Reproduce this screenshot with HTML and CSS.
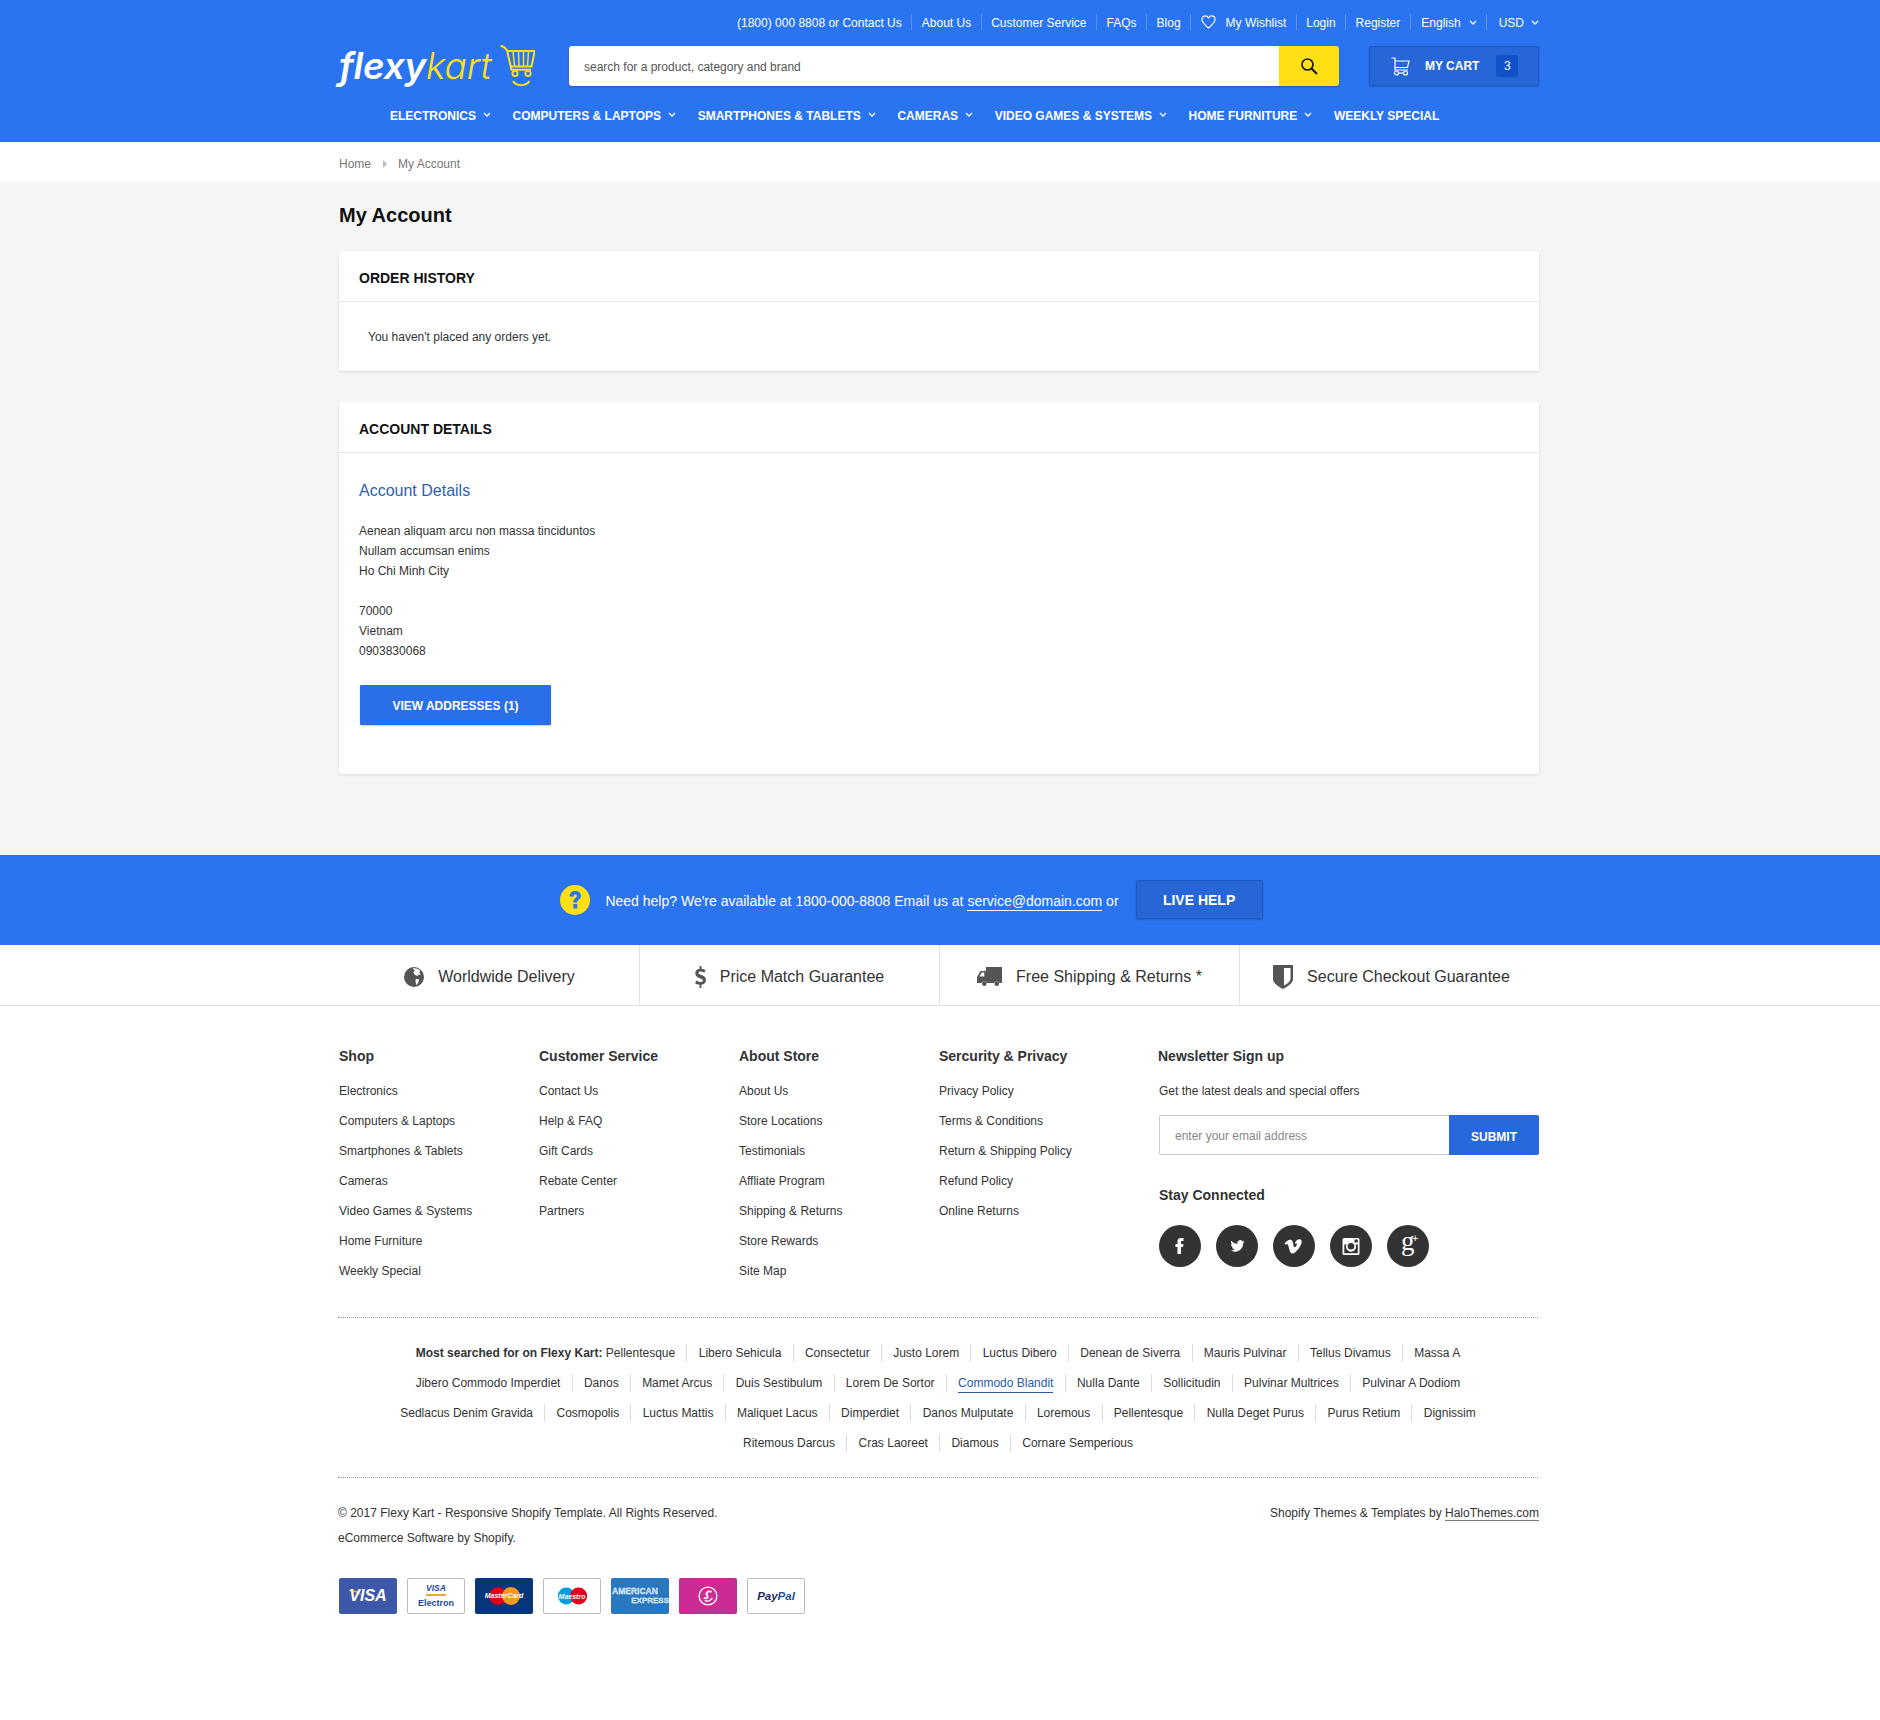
FILE: index.html
```html
<!DOCTYPE html>
<html lang="en">
<head>
<meta charset="utf-8">
<title>My Account - Flexy Kart</title>
<link rel="stylesheet" href="styles.css">
</head>
<body>
<header class="site-header">
  <div class="wrap">
    <ul class="topbar">
      <li>(1800) 000 8808 or Contact Us</li>
      <li>About Us</li>
      <li>Customer Service</li>
      <li>FAQs</li>
      <li>Blog</li>
      <li class="has-icon"><svg class="heart" viewBox="0 0 16 15" width="15" height="14"><path d="M8 14C3 9.800 1 7.600 1 4.900 1 2.700 2.600 1 4.600 1 6 1 7.200 1.800 8 3.200 8.800 1.800 10 1 11.400 1 13.400 1 15 2.700 15 4.900 15 7.600 13 9.800 8 14Z" fill="none" stroke="#fff" stroke-width="1.200"/></svg>My Wishlist</li>
      <li>Login</li>
      <li>Register</li>
      <li class="has-chev lang">English<svg class="chev" viewBox="0 0 8 5" width="8" height="5"><path d="M1 1l3 3 3-3" fill="none" stroke="#fff" stroke-width="1.300"/></svg></li>
      <li class="has-chev last">USD<svg class="chev" viewBox="0 0 8 5" width="8" height="5"><path d="M1 1l3 3 3-3" fill="none" stroke="#fff" stroke-width="1.300"/></svg></li>
    </ul>
    <div class="mainbar">
      <div class="logo">
        <span class="logo-a">flexy</span><span class="logo-b">kart</span>
        <svg class="logo-cart" viewBox="0 0 35 42" width="35" height="42" fill="none" stroke="#ffe015" stroke-width="1.800">
          <path d="M0.500 0.900C4 1.200 6 3 7.300 6.500L11.500 24.800H31" stroke-width="2"/>
          <path d="M7 6H34.800L31.500 21.500H10.800" stroke-width="2"/>
          <path d="M13 6.500L14.500 21M18.500 6.500L19 21M23.500 6.500L23.500 21M28.500 6.500L27.500 21" stroke-width="1.500"/>
          <circle cx="15" cy="28.500" r="2.600"/><circle cx="28" cy="28.500" r="2.600"/>
          <path d="M13 36C16 41.500 26 41.500 29.500 36" stroke-width="2"/>
        </svg>
      </div>
      <form class="search">
        <div class="search-field">search for a product, category and brand</div>
        <div class="search-btn"><svg viewBox="0 0 18 18" width="18" height="18"><circle cx="7.500" cy="7.500" r="5.500" fill="none" stroke="#1a1a1a" stroke-width="1.700"/><path d="M11.500 11.500L17 17" stroke="#1a1a1a" stroke-width="2.200"/></svg></div>
      </form>
      <div class="cart">
        <svg viewBox="0 0 19 19" width="19" height="19" fill="none" stroke="#fff" stroke-width="1.200"><path d="M0.500 1H4V13H17M4 4H18L16.500 10.500H4"/><circle cx="5.500" cy="16" r="2"/><circle cx="14.500" cy="16" r="2"/><path d="M7.500 16H12.500"/></svg>
        <span class="cart-label">MY CART</span>
        <span class="cart-count">3</span>
      </div>
    </div>
    <nav class="mainnav">
      <a class="nav-item">ELECTRONICS<svg class="chev" viewBox="0 0 8 5" width="8" height="5"><path d="M1 1l3 3 3-3" fill="none" stroke="#fff" stroke-width="1.300"/></svg></a>
      <a class="nav-item">COMPUTERS &amp; LAPTOPS<svg class="chev" viewBox="0 0 8 5" width="8" height="5"><path d="M1 1l3 3 3-3" fill="none" stroke="#fff" stroke-width="1.300"/></svg></a>
      <a class="nav-item">SMARTPHONES &amp; TABLETS<svg class="chev" viewBox="0 0 8 5" width="8" height="5"><path d="M1 1l3 3 3-3" fill="none" stroke="#fff" stroke-width="1.300"/></svg></a>
      <a class="nav-item">CAMERAS<svg class="chev" viewBox="0 0 8 5" width="8" height="5"><path d="M1 1l3 3 3-3" fill="none" stroke="#fff" stroke-width="1.300"/></svg></a>
      <a class="nav-item">VIDEO GAMES &amp; SYSTEMS<svg class="chev" viewBox="0 0 8 5" width="8" height="5"><path d="M1 1l3 3 3-3" fill="none" stroke="#fff" stroke-width="1.300"/></svg></a>
      <a class="nav-item">HOME FURNITURE<svg class="chev" viewBox="0 0 8 5" width="8" height="5"><path d="M1 1l3 3 3-3" fill="none" stroke="#fff" stroke-width="1.300"/></svg></a>
      <a class="nav-item">WEEKLY SPECIAL</a>
    </nav>
  </div>
</header>

<div class="breadcrumb">
  <div class="wrap crumbs"><span>Home</span><i class="crumb-arrow"></i><span>My Account</span></div>
</div>

<main class="content">
  <div class="wrap">
    <h1 class="page-title">My Account</h1>
    <section class="card card-orders">
      <h2 class="card-head">ORDER HISTORY</h2>
      <p class="no-orders">You haven't placed any orders yet.</p>
    </section>
    <section class="card card-details">
      <h2 class="card-head">ACCOUNT DETAILS</h2>
      <div class="card-body">
        <h3 class="details-title">Account Details</h3>
        <p class="address">Aenean aliquam arcu non massa tinciduntos<br>Nullam accumsan enims<br>Ho Chi Minh City<br><br>70000<br>Vietnam<br>0903830068</p>
        <a class="btn-address">VIEW ADDRESSES (1)</a>
      </div>
    </section>
  </div>
</main>

<section class="help">
  <svg class="help-icon" viewBox="0 0 30 30" width="30" height="30"><circle cx="15" cy="15" r="15" fill="#ffe015"/><path d="M9.500 11.500C9.700 8 12 6 15.300 6 18.700 6 21 8 21 10.800 21 14.500 17.300 14.800 17.300 17.500H13.300C13 13.500 16.800 13 16.800 10.900 16.800 10 16.200 9.500 15.200 9.500 14 9.500 13.500 10.400 13.300 11.800Z" fill="#2a74f1"/><rect x="13.300" y="19" width="4" height="4.500" fill="#2a74f1"/></svg>
  <p class="help-text">Need help? We're available at 1800-000-8808 Email us at <a class="help-link">service@domain.com</a> or</p>
  <a class="btn-help">LIVE HELP</a>
</section>

<section class="features">
  <div class="wrap features-row">
    <div class="feature">
      <svg viewBox="0 0 20 20" width="20" height="20"><circle cx="10" cy="10" r="10" fill="#555"/><path fill="#fff" d="M8.500 1.500C11 1 14 1.500 16.300 3.800L15.300 5.300 16.800 8 14.800 7.400 13.300 9 10.500 7.800 9.300 5.200 11 3.600ZM11.800 11.800L15.300 12.500 14.300 15.500 12.500 18.300 11.500 15Z"/></svg>
      <span>Worldwide Delivery</span>
    </div>
    <div class="feature">
      <svg viewBox="0 0 12 24" width="11" height="22"><path fill="#555" d="M5 0h2v3c2 .2 3.400.8 4.500 1.600L10 7.300C8.800 6.500 7.500 6 6 6 4.500 6 3.700 6.600 3.700 7.500 3.700 10 12 9.300 12 15.300 12 18 10 20 7 20.400V24H5v-3.500c-2-.2-3.800-1-5-2l1.600-2.700c1.300 1 3 1.700 4.500 1.700 1.600 0 2.500-.7 2.500-1.800C8.600 13 .3 13.700.3 7.900.3 5.300 2.200 3.500 5 3.100Z"/></svg>
      <span>Price Match Guarantee</span>
    </div>
    <div class="feature">
      <svg viewBox="0 0 25 20" width="25" height="20"><path fill="#555" fill-rule="evenodd" d="M9 0H25V16H22.500A3 3 0 0 0 17 16H10A3 3 0 0 0 4.500 16H0V10L3.500 4H9ZM2.500 9.500H7.300V5.500H4.800ZM7.300 14.500a2.300 2.300 0 1 1 0 4.600 2.300 2.300 0 0 1 0-4.600ZM19.800 14.500a2.300 2.300 0 1 1 0 4.600 2.300 2.300 0 0 1 0-4.600Z"/></svg>
      <span>Free Shipping &amp; Returns *</span>
    </div>
    <div class="feature">
      <svg viewBox="0 0 20 24" width="20" height="24"><path fill="#555" d="M0 0H20V14C20 18 15 21.500 10 24 5 21.500 0 18 0 14ZM11 3V20.500C14.500 18.500 17.500 16.500 17.500 13.500V3Z"/></svg>
      <span>Secure Checkout Guarantee</span>
    </div>
  </div>
</section>

<footer class="footer">
  <div class="wrap">
    <div class="footer-cols">
      <div class="fcol">
        <h4 class="fhead">Shop</h4>
        <ul class="flinks"><li>Electronics</li><li>Computers &amp; Laptops</li><li>Smartphones &amp; Tablets</li><li>Cameras</li><li>Video Games &amp; Systems</li><li>Home Furniture</li><li>Weekly Special</li></ul>
      </div>
      <div class="fcol">
        <h4 class="fhead">Customer Service</h4>
        <ul class="flinks"><li>Contact Us</li><li>Help &amp; FAQ</li><li>Gift Cards</li><li>Rebate Center</li><li>Partners</li></ul>
      </div>
      <div class="fcol">
        <h4 class="fhead">About Store</h4>
        <ul class="flinks"><li>About Us</li><li>Store Locations</li><li>Testimonials</li><li>Affliate Program</li><li>Shipping &amp; Returns</li><li>Store Rewards</li><li>Site Map</li></ul>
      </div>
      <div class="fcol fcol-sec">
        <h4 class="fhead">Sercurity &amp; Privacy</h4>
        <ul class="flinks"><li>Privacy Policy</li><li>Terms &amp; Conditions</li><li>Return &amp; Shipping Policy</li><li>Refund Policy</li><li>Online Returns</li></ul>
      </div>
      <div class="fcol-news">
        <h4 class="fhead">Newsletter Sign up</h4>
        <p class="news-sub">Get the latest deals and special offers</p>
        <div class="news-form"><div class="news-input">enter your email address</div><div class="news-btn">SUBMIT</div></div>
        <h4 class="fhead stay">Stay Connected</h4>
        <div class="socials">
          <a class="social"><svg viewBox="0 0 42 42" width="42" height="42"><path fill="#fff" d="M18.500 29V22H16.500V19H18.500V16.500C18.500 14 19.800 13 22 13H24.500V16H23C22 16 22 16.500 22 17.500V19H24.500L24 22H22V29Z"/></svg></a>
          <a class="social"><svg viewBox="0 0 42 42" width="42" height="42"><path transform="translate(21 21) scale(.78) translate(-21 -21)" fill="#fff" d="M28.500 15.800c.8-.5 1.300-1.100 1.600-2-.7.400-1.500.7-2.300.9a3.700 3.700 0 0 0-6.300 3.400c-3-.2-5.800-1.600-7.700-3.900-1 1.700-.5 3.900 1.100 5-.6 0-1.200-.2-1.700-.5 0 1.800 1.300 3.400 3 3.700-.5.200-1.100.2-1.700.1.500 1.500 1.900 2.500 3.500 2.600a7.500 7.500 0 0 1-5.500 1.500c5 3.200 11.500 2 14.700-3 1.200-1.800 1.800-4 1.700-6 .8-.5 1.400-1.200 1.900-2-.7.300-1.500.5-2.300.6Z"/></svg></a>
          <a class="social"><svg viewBox="0 0 42 42" width="42" height="42"><path transform="translate(20 21.500) scale(.85) translate(-22 -21.500)" fill="#fff" d="M12 17.500C14.500 15.500 16.500 13.500 18.500 13.500 20.500 13.300 21.500 14.500 22 17 22.500 20.500 23 22.500 24 22.500 24.800 22.500 26 21 26.500 19.500 26.800 18 26 17.500 24 18.300 25 14.800 27 13 29.700 13 31.500 13.100 32.300 14.300 32.200 16.500 32 19 30.300 22 27 26 24.500 29 22.500 30 21 29.800 19.500 29.700 18.500 28 17.500 24.500 16.800 21.500 16.200 18.500 15.300 18.500 15 18.500 14.300 19 13.200 19.500Z"/></svg></a>
          <a class="social"><svg viewBox="0 0 42 42" width="42" height="42"><path fill="#fff" fill-rule="evenodd" d="M14 13H28A1.500 1.500 0 0 1 29.500 14.500V28.500A1.500 1.500 0 0 1 28 30H14A1.500 1.500 0 0 1 12.500 28.500V14.500A1.500 1.500 0 0 1 14 13ZM24.500 14.500V17.500H27.800V14.500ZM14.300 19.500V28.300H27.800V19.500H25.500A5 5 0 1 1 16.500 19.500ZM21 18A3.300 3.300 0 1 0 21 24.600 3.300 3.300 0 0 0 21 18Z"/></svg></a>
          <a class="social gplus"><span class="gplus-g">g</span><span class="gplus-p">+</span></a>
        </div>
      </div>
    </div>

    <div class="searched">
      <ul class="search-line">
        <li><b>Most searched for on Flexy Kart:</b> Pellentesque</li><li>Libero Sehicula</li><li>Consectetur</li><li>Justo Lorem</li><li>Luctus Dibero</li><li>Denean de Siverra</li><li>Mauris Pulvinar</li><li>Tellus Divamus</li><li>Massa A</li>
      </ul>
      <ul class="search-line">
        <li>Jibero Commodo Imperdiet</li><li>Danos</li><li>Mamet Arcus</li><li>Duis Sestibulum</li><li>Lorem De Sortor</li><li><a class="hl">Commodo Blandit</a></li><li>Nulla Dante</li><li>Sollicitudin</li><li>Pulvinar Multrices</li><li>Pulvinar A Dodiom</li>
      </ul>
      <ul class="search-line">
        <li>Sedlacus Denim Gravida</li><li>Cosmopolis</li><li>Luctus Mattis</li><li>Maliquet Lacus</li><li>Dimperdiet</li><li>Danos Mulputate</li><li>Loremous</li><li>Pellentesque</li><li>Nulla Deget Purus</li><li>Purus Retium</li><li>Dignissim</li>
      </ul>
      <ul class="search-line">
        <li>Ritemous Darcus</li><li>Cras Laoreet</li><li>Diamous</li><li>Cornare Semperious</li>
      </ul>
    </div>

    <div class="legal">
      <div><p>© 2017 Flexy Kart - Responsive Shopify Template. All Rights Reserved.</p><p>eCommerce Software by Shopify.</p></div>
      <p>Shopify Themes &amp; Templates by <a class="halo">HaloThemes.com</a></p>
    </div>

    <div class="payments">
      <div class="pay pay-visa"><svg class="visa-flick" viewBox="0 0 14 8" width="14" height="8"><path d="M0 1C5 0 10 2 13 7 9 4 5 2.500 0 2Z" fill="#f7a81b"/></svg><span class="visa-word">VISA</span></div>
      <div class="pay pay-plain"><span class="elec-visa">VISA</span><i class="elec-swoosh"></i><span class="elec-word">Electron</span></div>
      <div class="pay pay-navy"><svg viewBox="0 0 58 36" width="58" height="36"><circle cx="23" cy="18" r="9" fill="#e3001b"/><circle cx="36" cy="18" r="9" fill="#f59a1f"/></svg><span class="mc-word">MasterCard</span></div>
      <div class="pay pay-plain"><svg viewBox="0 0 58 36" width="56" height="34"><circle cx="23" cy="18" r="9" fill="#00a0e0"/><circle cx="36" cy="18" r="9" fill="#e3001b"/></svg><span class="mc-word">Maestro</span></div>
      <div class="pay pay-amex"><span class="amex-a">AMERICAN</span><span class="amex-b">EXPRESS</span></div>
      <div class="pay pay-pink"><svg viewBox="0 0 22 22" width="20" height="20" fill="none" stroke="#fff"><circle cx="11" cy="11" r="9.800" stroke-width="1.500"/><path d="M15 6.500C11 5 8 7.500 10 10.500 12 13 8.500 14.500 6.500 13" stroke-width="2"/><path d="M7.500 15.800C10 17.500 14 16.500 15.800 13" stroke-width="1.500"/></svg></div>
      <div class="pay pay-plain"><span class="pp"><b class="pp-a">Pay</b><b class="pp-b">Pal</b></span></div>
    </div>
  </div>
</footer>
</body>
</html>
```
FILE: styles.css
```css
* { box-sizing: border-box; }
html, body { margin: 0; padding: 0; }
body { background: #fff; color: #333; font: 12px/20px "Liberation Sans", Arial, sans-serif; min-height: 1720px; }
ul { list-style: none; margin: 0; padding: 0; }
h1, h2, h3, h4, p { margin: 0; }
.wrap { width: 1200px; margin: 0 auto; position: relative; left: -1px; }

/* header */
.site-header { background: #2a74f1; height: 142px; color: #fff; }
.topbar { display: flex; justify-content: flex-end; padding-top: 14px; height: 46px; }
.topbar li { display: flex; align-items: center; height: 16px; padding: 2px 9.500px 0; border-right: 1px solid #5d94f4; }
.topbar li.lang { padding-left: 10.500px; }
.topbar li.last { border-right: 0; padding: 2px 0 0 11.500px; }
.heart { margin-right: 10px; margin-top: -2px; }
.has-chev .chev { margin: -2px 0 0 8px; }
.last .chev { margin-left: 7px; }
.mainbar { display: flex; align-items: center; height: 40px; }
.logo { width: 230px; height: 42px; display: flex; align-items: center; font-family: Inter, sans-serif; font-style: italic; font-size: 37px; line-height: 40px; letter-spacing: -.2px; }
.logo-a { font-weight: 600; color: #fff; }
.logo-b { font-weight: 300; color: #ffe015; }
.logo-cart { margin-left: 9px; flex: none; }
.search { display: flex; width: 770px; height: 40px; border-radius: 3px; overflow: hidden; box-shadow: 0 1px 2px rgba(0,0,0,.25); }
.search-field { flex: 1; background: #fff; color: #555; padding-left: 15px; line-height: 42px; }
.search-btn { width: 60px; background: #ffe015; display: flex; align-items: center; justify-content: center; }
.cart { margin-left: 30px; width: 170px; height: 40px; background: #2766d6; border: 1px solid #1f5ac4; border-radius: 2px; display: flex; align-items: center; padding-left: 21px; box-shadow: 0 1px 2px rgba(0,0,0,.2); }
.cart-label { font-weight: 700; margin-left: 15px; }
.cart-count { margin-left: 17px; width: 22px; height: 22px; background: #1252c8; border-radius: 2px; text-align: center; line-height: 22px; }
.mainnav { display: flex; padding: 20px 0 0 51px; }
.nav-item { display: flex; align-items: center; font-weight: 700; color: #fff; margin-right: 21.600px; height: 20px; }
.nav-item .chev { margin: -3px 0 0 7px; }

/* breadcrumb */
.breadcrumb { height: 40px; background: #fff; }
.crumbs { display: flex; align-items: center; height: 44px; color: #777; }
.crumb-arrow { width: 0; height: 0; border-left: 4px solid #bbb; border-top: 4px solid transparent; border-bottom: 4px solid transparent; margin: 0 11px 0 12px; }

/* content */
.content { background: #f5f5f5; height: 673px; padding-top: 1px; }
.page-title { font-size: 20px; line-height: 30px; font-weight: 700; color: #111; margin-top: 17px; }
.card { background: #fff; border-radius: 3px; box-shadow: 0 1px 3px rgba(0,0,0,.12); }
.card-orders { margin-top: 21px; height: 120px; }
.card-details { margin-top: 31px; height: 372px; }
.card-head { font-size: 14px; line-height: 46px; height: 46px; padding: 4px 0 0 20px; box-sizing: content-box; font-weight: 700; color: #111; border-bottom: 1px solid #e6e6e6; }
.no-orders { padding: 25px 0 0 29px; }
.card-body { padding: 26px 20px 0; }
.details-title { font-size: 16px; font-weight: 400; color: #2d5fb5; line-height: 24px; }
.address { margin-top: 18px; line-height: 20px; color: #333; }
.btn-address { display: block; margin: 24px 0 0 1px; width: 191px; height: 40px; background: #2a6fe8; color: #fff; font-weight: 700; text-align: center; line-height: 42px; border-radius: 1px; box-shadow: 0 1px 2px rgba(0,0,0,.2); }

/* help */
.help { background: #2a74f1; height: 90px; display: flex; align-items: center; justify-content: center; color: #fff; padding-right: 57px; }
.help-icon { flex: none; margin-right: 15px; }
.help-text { font-size: 14px; padding-top: 2px; }
.help-link { border-bottom: 1px solid #fff; padding: 0 0 1px; }
.btn-help { margin: -1px 0 0 17px; width: 127px; height: 39px; background: #2766d6; border: 1px solid #1f5ac4; border-radius: 2px; box-shadow: 0 1px 2px rgba(0,0,0,.2); font-size: 14px; font-weight: 700; text-align: center; line-height: 39px; }

/* features */
.features { border-bottom: 1px solid #e2e2e2; height: 61px; }
.features-row { display: grid; grid-template-columns: repeat(4, 300px); height: 60px; left: 0; }
.feature { display: flex; align-items: center; justify-content: center; gap: 14px; font-size: 16px; color: #333; border-right: 1px solid #e2e2e2; padding-top: 3px; }
.feature:last-child { border-right: 0; padding-left: 3px; }

/* footer */
.footer-cols { display: flex; padding-top: 40px; height: 312px; }
.fcol { width: 200px; }
.fhead { font-size: 14px; line-height: 20px; font-weight: 700; color: #333; }
.flinks { margin-top: 10px; }
.flinks li { height: 30px; line-height: 30px; }
.fcol-news { margin-left: 19px; width: 381px; }
.news-sub { margin-top: 10px; line-height: 30px; padding-left: 1px; }
.news-form { display: flex; margin: 9px 0 0 1px; height: 40px; }
.news-input { flex: 1; border: 1px solid #ccc; border-right: 0; border-radius: 2px 0 0 2px; color: #888; padding-left: 15px; line-height: 40px; }
.news-btn { width: 90px; background: #2768dc; color: #fff; font-weight: 700; text-align: center; line-height: 44px; border-radius: 0 2px 2px 0; }
.stay { margin: 30px 0 0 1px; }
.socials { display: flex; gap: 15px; margin: 20px 0 0 1px; }
.social { width: 42px; height: 42px; border-radius: 50%; background: #333; display: block; position: relative; }
.social svg { display: block; }
.gplus { font-family: "Liberation Serif", serif; color: #fff; }
.gplus-g { position: absolute; left: 14px; top: 3px; font-size: 27px; line-height: 27px; }
.gplus-p { position: absolute; left: 25px; top: 8px; font-family: "Liberation Sans", sans-serif; font-size: 11px; line-height: 11px; }

.searched { border-top: 1px dotted #999; border-bottom: 1px dotted #999; height: 161px; padding-top: 20px; margin: -1px 1px 0 -1px; }
.search-line { display: flex; justify-content: center; height: 30px; align-items: center; }
.search-line li { height: 18px; line-height: 18px; padding: 0 11.250px; border-right: 1px solid #ddd; }
.search-line li:last-child { border-right: 0; }
.search-line b { color: #333; }
.hl { color: #2a5aa8; border-bottom: 1px solid #2a5aa8; display: inline-block; line-height: 16px; height: 18px; }
.legal { display: flex; justify-content: space-between; padding-top: 23px; line-height: 25px; margin-left: -1px; }
.legal p { line-height: 25px; }
.halo { border-bottom: 1px solid #777; }
.payments { display: flex; gap: 10px; margin-top: 27px; }
.pay { width: 58px; height: 36px; border-radius: 2px; position: relative; display: flex; flex-direction: column; align-items: center; justify-content: center; overflow: hidden; flex: none; }
.pay-visa { background: #3d58a8; }
.visa-flick { position: absolute; left: 10px; top: 11px; }
.visa-word { color: #fff; font: italic 700 16px/16px "Liberation Sans", sans-serif; position: relative; }
.pay-plain { background: #fff; border: 1px solid #bbb; }
.elec-visa { color: #1b4a9c; font: italic 700 8.500px/9px "Liberation Sans", sans-serif; }
.elec-swoosh { width: 20px; height: 1.500px; background: #eea83a; margin: 1px 0 2px; }
.elec-word { color: #1b4a9c; font: 700 9px/10px "Liberation Sans", sans-serif; }
.pay-navy { background: #06367a; }
.mc-word { position: absolute; color: #fff; font: italic 700 7px/8px "Liberation Sans", sans-serif; left: 0; right: 0; top: 14px; text-align: center; }
.pay-amex { background: #2878c0; color: #a9cdec; font: 700 8.500px/10px "Liberation Sans", sans-serif; align-items: stretch; -webkit-text-stroke: .3px #fff; }
.amex-a { padding-left: 1px; }
.amex-b { text-align: right; font-size: 8px; }
.pay-pink { background: #cc2b93; }
.pp { font: italic 700 11.500px/12px "Liberation Sans", sans-serif; }
.pp-a { color: #1a2a63; }
.pp-b { color: #1c4e94; }
```
